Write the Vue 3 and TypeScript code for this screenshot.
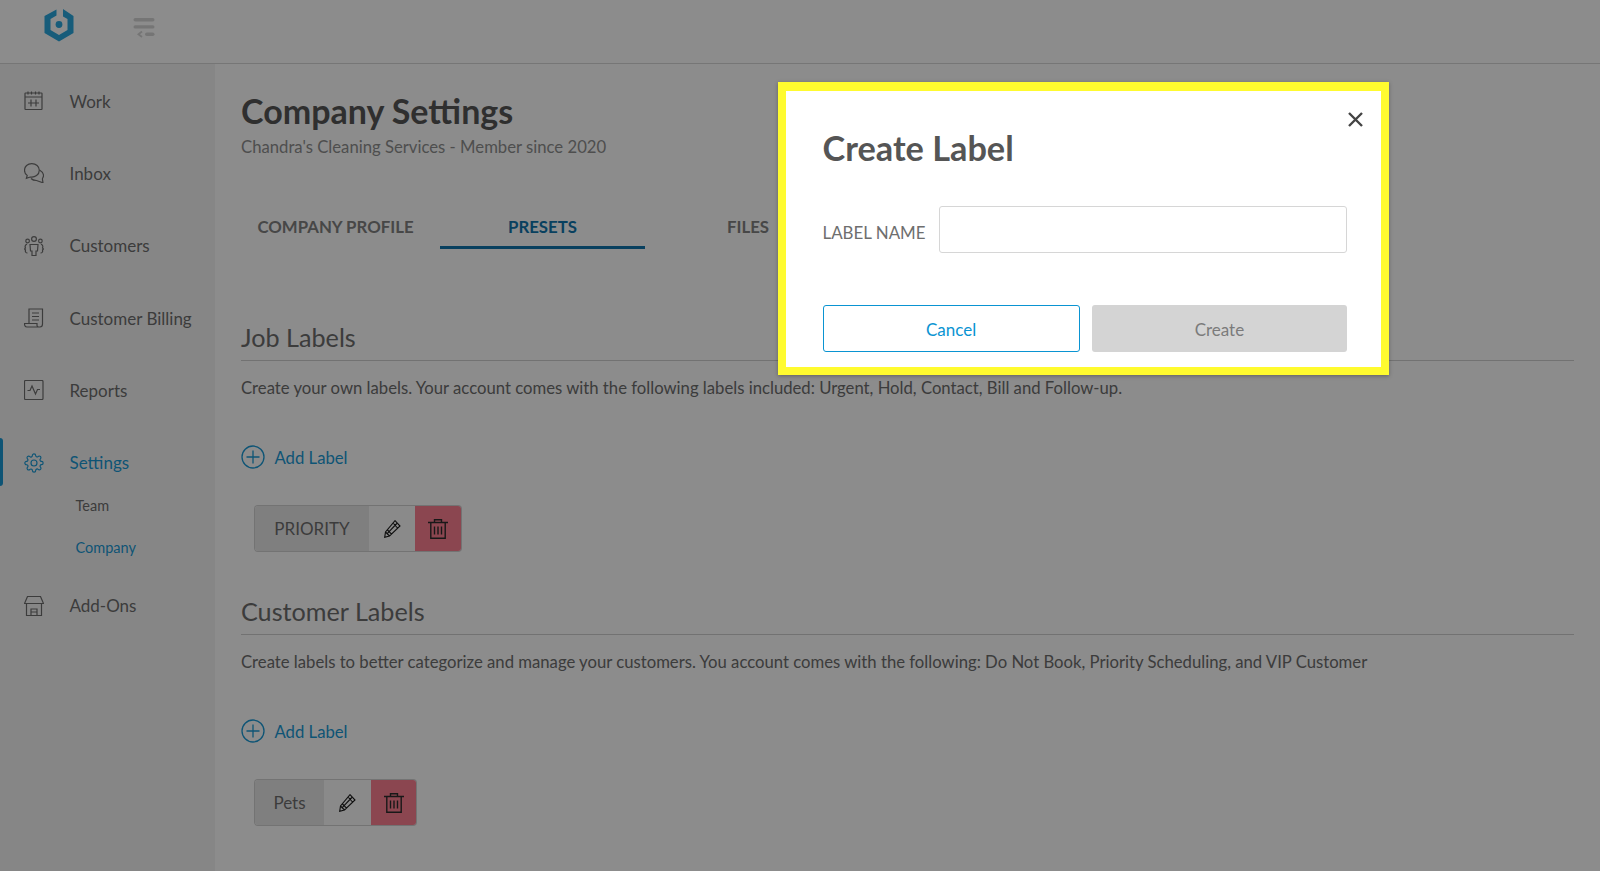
<script setup lang="ts">
interface NavItem { label: string; icon: string; active?: boolean }
const nav: NavItem[] = [
  { label: 'Work', icon: 'cal' },
  { label: 'Inbox', icon: 'chat' },
  { label: 'Customers', icon: 'people' },
  { label: 'Customer Billing', icon: 'bill' },
  { label: 'Reports', icon: 'report' },
  { label: 'Settings', icon: 'gear', active: true },
]
const sections = [
  { title: 'Job Labels', desc: 'Create your own labels. Your account comes with the following labels included: Urgent, Hold, Contact, Bill and Follow-up.', chip: 'PRIORITY', cls: 'chip-a' },
  { title: 'Customer Labels', desc: 'Create labels to better categorize and manage your customers. You account comes with the following: Do Not Book, Priority Scheduling, and VIP Customer', chip: 'Pets', cls: 'chip-b' },
]
</script>

<template>
  <div class="page">
    <header class="top">
      <svg class="logo" viewBox="0 0 30 34" width="30" height="34">
        <path fill="#2aa8de" d="M12.5 1.5 L0.5 8 V25 L15 33.5 L29.5 25 V8 L19 1 V8.5 L23.5 11 V22 L15 27 L6.5 22 V11 L12.5 7.5 Z" />
        <circle cx="15" cy="16.5" r="3.4" fill="#2aa8de" />
      </svg>
      <svg class="collapse" viewBox="0 0 22 20" width="22" height="20">
        <rect x="0.5" y="0" width="21" height="3.4" rx="1.7" fill="#d6d6d6" />
        <rect x="0.5" y="7.2" width="21" height="3.4" rx="1.7" fill="#d6d6d6" />
        <rect x="12" y="14.6" width="9.5" height="3.4" rx="1.7" fill="#d6d6d6" />
        <path d="M9 13.5 L5.5 16.3 L9 19" fill="none" stroke="#d6d6d6" stroke-width="1.9" />
      </svg>
    </header>
    <div class="body">
      <aside class="side">
        <div v-for="item in nav" :key="item.label" class="nav" :class="{ active: item.active }">
          <span v-if="item.active" class="bar"></span>
          <svg class="ico" viewBox="0 0 20 20" width="20" height="20" fill="none" stroke="currentColor" stroke-width="1.2">
            <template v-if="item.icon === 'cal'">
              <rect x="1" y="2" width="17" height="16.5" rx="0.5" />
              <path d="M1 6h17M4 0.5v3M7.5 0.5v3M11.5 0.5v3M15 0.5v3M7 8.5v7M12 8.5v7M4 12h11" />
            </template>
            <template v-else-if="item.icon === 'chat'">
              <path d="M7.8 0.6 C3.6 0.6 0.5 3.4 0.5 7.2 C0.5 9.6 1.6 11.4 3.2 12.5 L2.4 15.4 L6.2 14 C11 14.8 15.3 11.6 15.3 7.2 C15.3 3.4 12 0.6 7.8 0.6 Z" />
              <path d="M15.5 7 C18 8.5 19.6 10.5 19.5 12.7 C19.4 14.2 18.6 15 18.4 16 L19 19.8 L12.5 17.5 C10.5 17.5 8.5 17 7 15.5" />
            </template>
            <template v-else-if="item.icon === 'people'">
              <circle cx="10" cy="3" r="2.4" />
              <circle cx="3.6" cy="5" r="1.8" />
              <circle cx="16.4" cy="5" r="1.8" />
              <path d="M6 8.5h8l-.5 6.5h-1.5v4.5H8V15H6.5z" />
              <path d="M3 8 C1 9 1 11 1.5 12 L0.5 13 L1.5 14 C1 16 2 17 3.5 17M17 8 C19 9 19 11 18.5 12 L19.5 13 L18.5 14 C19 16 18 17 16.5 17" />
            </template>
            <template v-else-if="item.icon === 'bill'">
              <path d="M5 15 V1 H18.5 V16 C18.5 18 17.5 19 16 19 H3 C1 19 0.5 17.5 0.5 15.5 H13 V17.5 C13 18.5 14 19 15 19" />
              <path d="M8 5h7M8 8.5h7M8 12h7" />
            </template>
            <template v-else-if="item.icon === 'report'">
              <rect x="0.5" y="0.5" width="18.5" height="19" rx="1" />
              <path d="M3.5 10.5 H6 L8 6 L11.5 14 L13.5 9.5 H16" />
            </template>
            <template v-else>
              <g transform="scale(.833)" stroke-width="1.4">
                <circle cx="12" cy="12" r="3.6" />
                <path d="M19.4 15a1.65 1.65 0 0 0 .33 1.82l.06.06a2 2 0 0 1 0 2.83 2 2 0 0 1-2.83 0l-.06-.06a1.65 1.65 0 0 0-1.82-.33 1.65 1.65 0 0 0-1 1.51V21a2 2 0 0 1-2 2 2 2 0 0 1-2-2v-.09A1.65 1.65 0 0 0 9 19.4a1.65 1.65 0 0 0-1.82.33l-.06.06a2 2 0 0 1-2.83 0 2 2 0 0 1 0-2.83l.06-.06a1.65 1.65 0 0 0 .33-1.82 1.65 1.65 0 0 0-1.51-1H3a2 2 0 0 1-2-2 2 2 0 0 1 2-2h.09A1.65 1.65 0 0 0 4.6 9a1.65 1.65 0 0 0-.33-1.82l-.06-.06a2 2 0 0 1 0-2.83 2 2 0 0 1 2.83 0l.06.06a1.65 1.65 0 0 0 1.82.33H9a1.65 1.65 0 0 0 1-1.51V3a2 2 0 0 1 2-2 2 2 0 0 1 2 2v.09a1.65 1.65 0 0 0 1 1.51 1.65 1.65 0 0 0 1.82-.33l.06-.06a2 2 0 0 1 2.83 0 2 2 0 0 1 0 2.83l-.06.06a1.65 1.65 0 0 0-.33 1.82V9a1.65 1.65 0 0 0 1.51 1H21a2 2 0 0 1 2 2 2 2 0 0 1-2 2h-.09a1.65 1.65 0 0 0-1.51 1z" />
              </g>
            </template>
          </svg>
          <span class="nav-text">{{ item.label }}</span>
        </div>
        <div class="subs">
          <div class="sub">Team</div>
          <div class="sub on">Company</div>
        </div>
        <div class="nav">
          <svg class="ico" viewBox="0 0 20 20" width="20" height="20" fill="none" stroke="currentColor" stroke-width="1.2">
            <path d="M3.5 0.5h13l3 7H0.5zM2.5 7.5v12h15v-12M7 19.500v-6.500h6v6.500M7 16h6" />
          </svg>
          <span class="nav-text">Add-Ons</span>
        </div>
      </aside>
      <main class="main">
        <h1 class="h1">Company Settings</h1>
        <p class="sub-h">Chandra's Cleaning Services - Member since 2020</p>
        <nav class="tabs">
          <div class="tab">COMPANY PROFILE</div>
          <div class="tab sel">PRESETS</div>
          <div class="tab">FILES</div>
        </nav>
        <section v-for="s in sections" :key="s.title" class="sec">
          <h2 class="h2">{{ s.title }}</h2>
          <p class="desc">{{ s.desc }}</p>
          <div class="add">
            <svg viewBox="0 0 24 24" width="24" height="24" fill="none" stroke="#1a9ad6" stroke-width="1.3">
              <circle cx="12" cy="12" r="11" />
              <path d="M12 5.5v13M5.5 12h13" />
            </svg>
            <span class="add-text">Add Label</span>
          </div>
          <div class="chip" :class="s.cls">
            <span class="chip-label">{{ s.chip }}</span>
            <span class="chip-edit">
              <svg viewBox="0 0 17 18" width="17" height="18" fill="none" stroke="#1c1c1c" stroke-width="1.1">
                <path d="M11 0.7 L16 6 L5.5 16 L0.7 17.3 L1.5 12 Z M3.2 13.7 L12.8 3.5 M1.5 12 L5.5 16 M3.5 10 L7.5 14.2 M9.5 3.5 L13.5 8" />
              </svg>
            </span>
            <span class="chip-del">
              <svg viewBox="0 0 20 20" width="20" height="20" fill="none" stroke="#2c2c2c" stroke-width="1.4">
                <path d="M0 3.5h20M6.5 3.5V0.7h7v2.800M2.800 3.500V19.300h14.400V3.500M6.500 7.500v8M10 7.500v8M13.500 7.500v8" />
              </svg>
            </span>
          </div>
        </section>
      </main>
    </div>
    <div class="overlay">
      <div class="modal">
        <svg class="close" viewBox="0 0 15 15" width="15" height="15" stroke="#444" stroke-width="2.4" fill="none">
          <path d="M1 1l13 13M14 1L1 14" />
        </svg>
        <h3 class="m-title">Create Label</h3>
        <div class="m-row">
          <label class="m-label">LABEL NAME</label>
          <div class="m-input"></div>
        </div>
        <div class="m-actions">
          <button class="btn cancel">Cancel</button>
          <button class="btn create">Create</button>
        </div>
      </div>
    </div>
  </div>
</template>

<style scoped>
.page { position: relative; width: 1600px; height: 871px; overflow: hidden; background: #fff; font-family: Lato, "Open Sans", sans-serif; color: #6e6e6e; }
.top { height: 64px; box-sizing: border-box; border-bottom: 1px solid #d8d8d8; display: flex; align-items: flex-start; background: #fff; padding: 8px 0 0 44px; }
.logo { display: block; }
.collapse { margin: 10px 0 0 59px; }
.body { display: flex; height: 807px; }
.side { width: 215px; background: #f5f5f5; flex: none; padding-top: 1px; box-sizing: border-box; }
.nav { position: relative; height: 72.3px; display: flex; align-items: center; padding-left: 24px; color: #6e6e6e; font-size: 17px; }
.nav.active { color: #1a9ad6; }
.bar { position: absolute; left: 0; top: 12px; width: 3px; height: 48px; background: #1a9ad6; border-radius: 0 3px 3px 0; }
.ico { flex: none; margin-right: 25.5px; }
.subs { margin-top: -14px; margin-bottom: 2px; padding-left: 75.5px; font-size: 14.5px; }
.sub { height: 41.5px; display: flex; align-items: center; color: #6e6e6e; }
.sub.on { color: #1a9ad6; }
.main { flex: 1; padding: 22px 26px 0 26px; min-width: 0; }
.h1 { margin: 0; font-size: 34px; font-weight: 700; line-height: 49px; color: #575757; }
.sub-h { margin: 1px 0 0; font-size: 16.7px; line-height: 22px; color: #8f8f8f; }
.tabs { display: grid; grid-template-columns: 209px 205px 206px; margin: 43px 0 0 -10px; }
.tab { text-align: center; font-size: 16.8px; font-weight: 700; color: #828282; height: 45px; padding-top: 15px; box-sizing: border-box; line-height: 22px; }
.tab.sel { color: #0f75ad; border-bottom: 3px solid #0f75ad; height: 48px; }
.h2 { margin: 0; font-size: 25.2px; font-weight: 400; line-height: 34px; padding-bottom: 6px; border-bottom: 1px solid #d0d0d0; color: #6e6e6e; }
.tabs + .sec { margin-top: 71px; }
.sec + .sec { margin-top: 43px; }
.desc { margin: 16px 0 0; font-size: 16.7px; line-height: 22px; color: #6e6e6e; }
.add { display: flex; align-items: center; gap: 9.5px; margin-top: 46px; font-size: 16.7px; color: #1a9ad6; height: 24px; }
.add-text { padding-top: 2px; }
.chip { display: inline-flex; height: 45px; margin: 37px 0 0 14px; border-radius: 3px; overflow: hidden; box-shadow: 0 0 0 1px #d2d2d2; vertical-align: top; }
.chip-label { display: flex; align-items: center; justify-content: center; background: #e8e8e8; font-size: 17px; color: #6e6e6e; }
.chip-edit, .chip-del { display: flex; align-items: center; justify-content: center; }
.chip-edit { background: #fbfbfb; }
.chip-del { background: #fd8093; }
.chip-a .chip-label { width: 114px; }
.chip-a .chip-edit { width: 46px; }
.chip-a .chip-del { width: 46px; }
.chip-b .chip-label { width: 69px; }
.chip-b .chip-edit { width: 47px; }
.chip-b .chip-del { width: 45px; }
.overlay { position: absolute; inset: 0; background: rgba(0, 0, 0, .45); }
.modal { position: absolute; left: 778px; top: 82px; width: 611px; height: 293px; box-sizing: border-box; border: 8px solid #fffb2f; border-top-width: 9px; background: #fff; padding: 36px 34px 0 36.5px; box-shadow: 0 1px 4px rgba(0,0,0,.3); }
.close { position: absolute; right: 18px; top: 21px; }
.m-title { margin: 0; font-size: 34.3px; line-height: 42px; font-weight: 700; color: #555; }
.m-row { display: flex; align-items: flex-start; margin-top: 37px; }
.m-label { font-size: 16.9px; color: #6e6e6e; line-height: 22px; margin-top: 16px; width: 116.5px; flex: none; white-space: nowrap; }
.m-input { flex: 1; height: 47px; box-sizing: border-box; border: 1px solid #d6d6d6; border-radius: 3px; background: #fff; }
.m-actions { display: flex; gap: 12px; margin-top: 52px; }
.btn { flex: 1; height: 47px; box-sizing: border-box; border-radius: 3px; font-family: inherit; font-size: 17px; padding: 2px 0 0; }
.cancel { background: #fff; border: 1.5px solid #0a94d2; color: #0a94d2; }
.create { background: #d4d4d4; border: 0; color: #7b7b7b; }
</style>
